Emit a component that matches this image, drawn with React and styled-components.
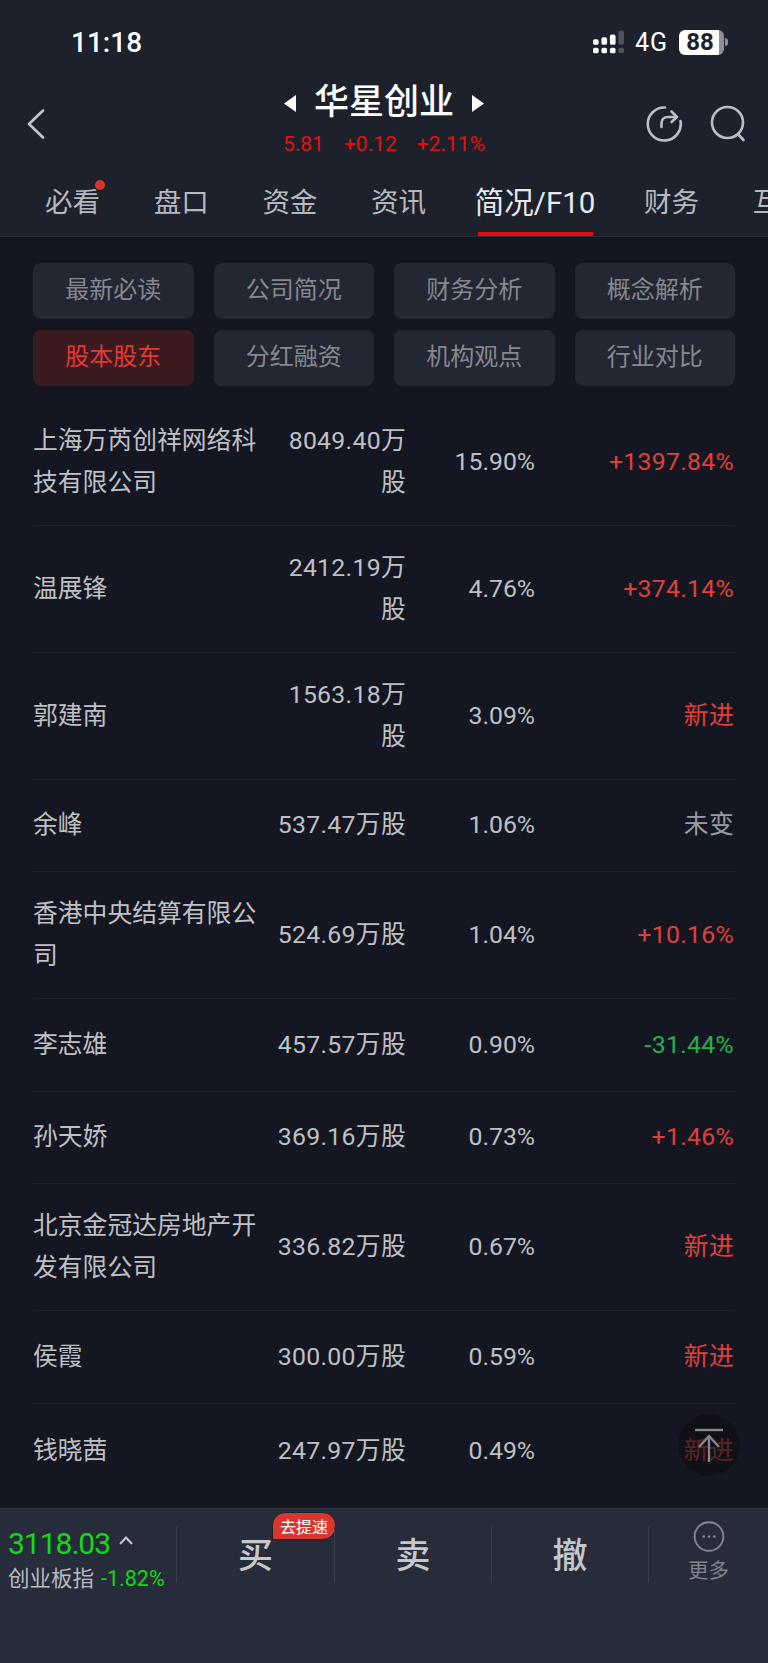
import React from 'react'
import styled, { createGlobalStyle } from 'styled-components'

const GlobalStyle = createGlobalStyle`
  html, body {
    margin: 0;
    padding: 0;
    background: #141722;
  }
  body {
    font-family: Roboto, "Noto Sans CJK SC", sans-serif;
  }
`

const tabs = [
  { label: '必看', dot: true },
  { label: '盘口' },
  { label: '资金' },
  { label: '资讯' },
  { label: '简况/F10', active: true },
  { label: '财务' },
  { label: '互动' },
]

const sections = [
  { label: '最新必读' },
  { label: '公司简况' },
  { label: '财务分析' },
  { label: '概念解析' },
  { label: '股本股东', active: true },
  { label: '分红融资' },
  { label: '机构观点' },
  { label: '行业对比' },
]

const holders = [
  { name: '上海万芮创祥网络科技有限公司', shares: '8049.40万股', ratio: '15.90%', change: '+1397.84%', tone: 'up' },
  { name: '温展锋', shares: '2412.19万股', ratio: '4.76%', change: '+374.14%', tone: 'up' },
  { name: '郭建南', shares: '1563.18万股', ratio: '3.09%', change: '新进', tone: 'up' },
  { name: '余峰', shares: '537.47万股', ratio: '1.06%', change: '未变', tone: 'flat' },
  { name: '香港中央结算有限公司', shares: '524.69万股', ratio: '1.04%', change: '+10.16%', tone: 'up' },
  { name: '李志雄', shares: '457.57万股', ratio: '0.90%', change: '-31.44%', tone: 'down' },
  { name: '孙天娇', shares: '369.16万股', ratio: '0.73%', change: '+1.46%', tone: 'up' },
  { name: '北京金冠达房地产开发有限公司', shares: '336.82万股', ratio: '0.67%', change: '新进', tone: 'up' },
  { name: '侯霞', shares: '300.00万股', ratio: '0.59%', change: '新进', tone: 'up' },
  { name: '钱晓茜', shares: '247.97万股', ratio: '0.49%', change: '新进', tone: 'up' },
]

const toneColors = { up: '#e0403a', down: '#22b24c', flat: '#9a9ca3' }

const SignalIcon = () => (
  <svg width="31" height="25" viewBox="0 0 33 25">
    <g fill="#fff">
      <rect x="0" y="9" width="6" height="6" rx="2" />
      <rect x="9" y="7" width="6" height="8" rx="2" />
      <rect x="18" y="4" width="6" height="11" rx="2" />
      <rect x="0" y="18" width="6" height="6" rx="2" />
      <rect x="9" y="18" width="6" height="6" rx="2" />
      <rect x="18" y="18" width="6" height="6" rx="2" />
    </g>
    <g fill="#50535c">
      <rect x="27" y="0" width="6" height="15" rx="2" />
      <rect x="27" y="18" width="6" height="6" rx="2" />
    </g>
  </svg>
)

const RefreshIcon = () => (
  <svg width="38" height="38" viewBox="0 0 38 38" fill="none" stroke="#bdbec2" strokeWidth="2.6" strokeLinecap="round" strokeLinejoin="round">
    <path d="M20 2.5A16.5 16.5 0 1 0 35.5 16" />
    <path d="M16.5 22v-3.5c0-4 2.5-6.5 6.5-6.5h8" />
    <path d="M26.5 6.5l5.5 5.5-5.5 5" />
  </svg>
)

const SearchIcon = () => (
  <svg width="36" height="38" viewBox="0 0 36 38" fill="none" stroke="#bdbec2" strokeWidth="2.6" strokeLinecap="round">
    <circle cx="17.5" cy="17.5" r="15.5" />
    <path d="M28 29l5.5 6" />
  </svg>
)

const BackIcon = () => (
  <svg width="18" height="30" viewBox="0 0 18 30" fill="none" stroke="#c4c5c9" strokeWidth="2.6" strokeLinecap="round" strokeLinejoin="round">
    <path d="M16 1.5L2 15l14 13.5" />
  </svg>
)

const Triangle = ({ dir }) => (
  <svg width="12" height="17" viewBox="0 0 12 17">
    <path d={dir === 'left' ? 'M12 0v17L0 8.5z' : 'M0 0v17l12-8.5z'} fill="#fff" />
  </svg>
)

const ChevronUp = () => (
  <svg width="14" height="9" viewBox="0 0 14 9" fill="none" stroke="#c6c7cb" strokeWidth="2">
    <path d="M1 8l6-6.5L13 8" />
  </svg>
)

const MoreIcon = () => (
  <svg width="32" height="32" viewBox="0 0 32 32" fill="none">
    <circle cx="16" cy="16" r="14.8" stroke="#81858f" strokeWidth="2" />
    <circle cx="10.5" cy="16" r="1.4" fill="#81858f" />
    <circle cx="16" cy="16" r="1.4" fill="#81858f" />
    <circle cx="21.5" cy="16" r="1.4" fill="#81858f" />
  </svg>
)

const TopIcon = () => (
  <svg width="30" height="34" viewBox="0 0 30 34" fill="none" stroke="#85878c" strokeWidth="2.4">
    <path d="M1 2h28" />
    <path d="M15 8v26" />
    <path d="M5 19L15 8l10 11" />
  </svg>
)

const App = () => {
  return (
    <Page>
      <GlobalStyle />
      <Header>
        <StatusBar>
          <Time>11:18</Time>
          <StatusRight>
            <SignalIcon />
            <Network>4G</Network>
            <Battery>
              <BatteryBody $level={88}>88</BatteryBody>
              <BatteryNub />
            </Battery>
          </StatusRight>
        </StatusBar>
        <NavBar>
          <BackSlot>
            <BackIcon />
          </BackSlot>
          <TitleBlock>
            <TitleRow>
              <Triangle dir="left" />
              <Title>华星创业</Title>
              <Triangle dir="right" />
            </TitleRow>
            <Quote>
              <span>5.81</span>
              <span>+0.12</span>
              <span>+2.11%</span>
            </Quote>
          </TitleBlock>
          <Actions>
            <RefreshIcon />
            <SearchIcon />
          </Actions>
        </NavBar>
        <TabBar>
          {tabs.map((t) => (
            <Tab key={t.label} $active={t.active}>
              {t.label}
              {t.dot && <TabDot />}
            </Tab>
          ))}
        </TabBar>
      </Header>

      <Main>
        <SectionGrid>
          {sections.map((s) => (
            <SectionButton key={s.label} $active={s.active}>
              {s.label}
            </SectionButton>
          ))}
        </SectionGrid>
        <HolderList>
          {holders.map((h) => (
            <HolderRow key={h.name}>
              <Name>{h.name}</Name>
              <Shares>{h.shares}</Shares>
              <Ratio>{h.ratio}</Ratio>
              <Change $tone={h.tone}>{h.change}</Change>
            </HolderRow>
          ))}
        </HolderList>
        <ScrollTop>
          <TopIcon />
        </ScrollTop>
      </Main>

      <Footer>
        <IndexBlock>
          <IndexTop>
            <IndexValue>3118.03</IndexValue>
            <ChevronUp />
          </IndexTop>
          <IndexBottom>
            创业板指<IndexChange>-1.82%</IndexChange>
          </IndexBottom>
        </IndexBlock>
        <TradeButton>
          买
          <Badge>去提速</Badge>
        </TradeButton>
        <TradeButton>卖</TradeButton>
        <TradeButton>撤</TradeButton>
        <MoreButton>
          <MoreIcon />
          <MoreLabel>更多</MoreLabel>
        </MoreButton>
      </Footer>
    </Page>
  )
}

export default App

const Page = styled.div`
  width: 768px;
  height: 1663px;
  display: flex;
  flex-direction: column;
  overflow: hidden;
  background: #141722;
`

const Header = styled.header`
  background: #1d212c;
  border-bottom: 1px solid #2b2e38;
`

const StatusBar = styled.div`
  height: 84px;
  display: flex;
  align-items: center;
  justify-content: space-between;
  padding: 0 40px 0 71px;
`

const Time = styled.div`
  color: #fff;
  font-size: 28px;
  font-weight: 500;
`

const StatusRight = styled.div`
  display: flex;
  align-items: center;
  gap: 11px;
`

const Network = styled.span`
  color: #fff;
  font-size: 25px;
  letter-spacing: 1px;
`

const Battery = styled.div`
  display: flex;
  align-items: center;
  gap: 1px;
`

const BatteryBody = styled.div`
  width: 45px;
  height: 25px;
  border-radius: 6px;
  display: flex;
  align-items: center;
  justify-content: center;
  padding-right: 3px;
  box-sizing: border-box;
  background: linear-gradient(to right, #fff ${({ $level }) => $level}%, #8d8f94 ${({ $level }) => $level}%);
  color: #1d212c;
  font-size: 24px;
  font-weight: 700;
`

const BatteryNub = styled.div`
  width: 3px;
  height: 8px;
  border-radius: 0 3px 3px 0;
  background: #8d8f94;
`

const NavBar = styled.div`
  height: 82px;
  display: grid;
  grid-template-columns: 1fr auto 1fr;
  align-items: center;
  padding: 0 22px;
`

const BackSlot = styled.div`
  display: flex;
  align-items: center;
  padding: 0 0 3px 5px;
`

const TitleBlock = styled.div`
  display: flex;
  flex-direction: column;
  align-items: center;
  align-self: start;
  padding-top: 2px;
`

const TitleRow = styled.div`
  display: flex;
  align-items: center;
  gap: 18px;
  height: 34px;
`

const Title = styled.h1`
  margin: 0;
  color: #fff;
  font-size: 35px;
  font-weight: 500;
  line-height: 34px;
`

const Quote = styled.div`
  display: flex;
  gap: 20px;
  margin-top: 12px;
  color: #e6100f;
  font-size: 21px;
  line-height: 24px;
`

const Actions = styled.div`
  display: flex;
  justify-content: flex-end;
  align-items: center;
  gap: 27px;
  padding-bottom: 3px;
`

const TabBar = styled.nav`
  height: 70px;
  display: flex;
  align-items: center;
  gap: 53.7px;
  padding: 0 0 0 45px;
  overflow: hidden;
`

const Tab = styled.div`
  position: relative;
  flex: none;
  height: 100%;
  box-sizing: border-box;
  display: flex;
  align-items: center;
  padding-bottom: 2px;
  margin: ${({ $active }) => ($active ? '0 -5px' : '0')};
  color: ${({ $active }) => ($active ? '#e8e9ec' : '#b6b8bd')};
  font-size: ${({ $active }) => ($active ? '29.5px' : '27.5px')};
  font-weight: 400;

  &::after {
    content: '';
    display: ${({ $active }) => ($active ? 'block' : 'none')};
    position: absolute;
    left: 3px;
    right: 2px;
    bottom: 0;
    height: 4px;
    background: #e1100f;
  }
`

const TabDot = styled.span`
  position: absolute;
  top: 14px;
  right: -5px;
  width: 10px;
  height: 10px;
  border-radius: 50%;
  background: #d8362f;
`

const Main = styled.main`
  position: relative;
  flex: 1;
  min-height: 0;
  overflow: hidden;
  padding: 26px 33px 0;
`

const SectionGrid = styled.div`
  display: grid;
  grid-template-columns: repeat(4, 1fr);
  gap: 11px 20px;
`

const SectionButton = styled.div`
  height: 56px;
  border-radius: 8px;
  display: flex;
  align-items: center;
  justify-content: center;
  padding-bottom: 7px;
  box-sizing: border-box;
  background: ${({ $active }) => ($active ? '#3c1b20' : '#232733')};
  color: ${({ $active }) => ($active ? '#e33a34' : '#85888f')};
  font-size: 24px;
`

const HolderList = styled.div`
  margin-top: 12.5px;
`

const HolderRow = styled.div`
  display: grid;
  grid-template-columns: 238px 135px 129px 1fr;
  align-items: center;
  padding: 21px 0;
  min-height: 49.5px;
  border-bottom: 1px solid #1e212c;
  color: #bfc0c4;
  font-size: 24.8px;
  line-height: 42px;

  &:last-child {
    padding-top: 23px;
    border-bottom: none;
  }
`

const Name = styled.div`
  padding-right: 4px;
`

const Shares = styled.div`
  text-align: right;
  letter-spacing: 0.3px;
`

const Ratio = styled.div`
  text-align: right;
`

const Change = styled.div`
  text-align: right;
  letter-spacing: 0.3px;
  margin-right: 1px;
  color: ${({ $tone }) => toneColors[$tone]};
`

const ScrollTop = styled.div`
  position: absolute;
  right: 28px;
  bottom: 32px;
  width: 62px;
  height: 62px;
  border-radius: 50%;
  display: flex;
  align-items: center;
  justify-content: center;
  background: rgba(14, 14, 17, 0.62);
`

const Footer = styled.footer`
  height: 155px;
  box-sizing: border-box;
  display: grid;
  grid-template-columns: 176px 158px 157px 157px 120px;
  align-items: start;
  padding-top: 18px;
  background: #262c3a;
  border-top: 1px solid #333845;
`

const IndexBlock = styled.div`
  height: 58px;
  padding-left: 8px;
  white-space: nowrap;
`

const IndexTop = styled.div`
  display: flex;
  align-items: center;
  gap: 9px;
  height: 34px;

  svg {
    margin-bottom: 8px;
  }
`

const IndexValue = styled.span`
  color: #12d916;
  font-size: 30px;
  line-height: 34px;
  letter-spacing: -1px;
`

const IndexBottom = styled.div`
  margin-top: 4px;
  color: #b8bac0;
  font-size: 21.5px;
  line-height: 28px;
`

const IndexChange = styled.span`
  margin-left: 7px;
  font-size: 21.5px;
  color: #12d916;
`

const TradeButton = styled.div`
  position: relative;
  height: 56px;
  box-sizing: border-box;
  display: flex;
  align-items: center;
  justify-content: center;
  padding-bottom: 6px;
  border-left: 1px solid #3a3f4c;
  color: #c6c7cb;
  font-size: 35px;
  font-weight: 500;
`

const Badge = styled.span`
  position: absolute;
  top: -15px;
  left: 95px;
  padding: 0 7px;
  height: 26px;
  display: flex;
  align-items: center;
  border: 1px solid #1d212c;
  border-radius: 13px 13px 13px 0;
  background: #d8362f;
  color: #fff;
  font-size: 16px;
  font-weight: 400;
  white-space: nowrap;
`

const MoreButton = styled.div`
  height: 56px;
  display: flex;
  flex-direction: column;
  align-items: center;
  border-left: 1px solid #3a3f4c;

  svg {
    margin-top: -6px;
  }
`

const MoreLabel = styled.span`
  margin-top: 7px;
  color: #7f838d;
  font-size: 20.5px;
  line-height: 24px;
`
